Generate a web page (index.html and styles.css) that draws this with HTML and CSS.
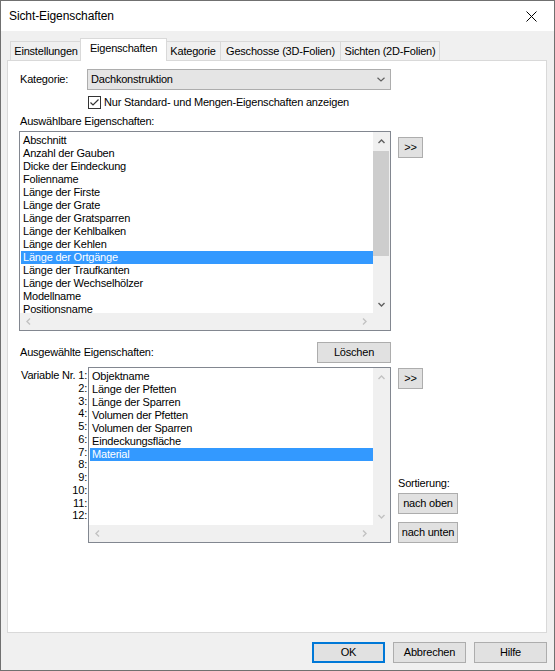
FILE: index.html
```html
<!DOCTYPE html>
<html lang="de">
<head>
<meta charset="utf-8">
<title>Sicht-Eigenschaften</title>
<link rel="stylesheet" href="styles.css">
</head>
<body>
<div class="window">
  <div class="titlebar">
    <span class="title">Sicht-Eigenschaften</span>
    <span class="close">
      <svg width="11" height="11" viewBox="0 0 11 11"><path d="M0.5 0.5 L10.5 10.5 M10.5 0.5 L0.5 10.5" stroke="#000" stroke-width="1" fill="none"/></svg>
    </span>
  </div>

  <div class="client">
    <div class="tabs">
      <div class="tab tab-settings">Einstellungen</div>
      <div class="tab tab-props active">Eigenschaften</div>
      <div class="tab tab-cat">Kategorie</div>
      <div class="tab tab-floors">Geschosse (3D-Folien)</div>
      <div class="tab tab-views">Sichten (2D-Folien)</div>
    </div>

    <div class="panel">
      <div class="kat-row">
        <span class="kat-label">Kategorie:</span>
        <div class="combo">
          <span class="combo-text">Dachkonstruktion</span>
          <svg class="combo-arrow" width="8" height="5" viewBox="0 0 8 5"><polyline points="0.5,0.8 4,4 7.5,0.8" fill="none" stroke="#606060" stroke-width="1.2"/></svg>
        </div>
      </div>

      <label class="check-row">
        <span class="checkbox">
          <svg width="11" height="11" viewBox="0 0 11 11"><polyline points="1.5,5.5 4,8 9.5,2.5" fill="none" stroke="#333" stroke-width="1.2"/></svg>
        </span>
        <span>Nur Standard- und Mengen-Eigenschaften anzeigen</span>
      </label>

      <div class="caption">Auswählbare Eigenschaften:</div>

      <div class="pick-row">
        <div class="listbox list-avail">
          <div class="items">
            <div class="item">Abschnitt</div>
            <div class="item">Anzahl der Gauben</div>
            <div class="item">Dicke der Eindeckung</div>
            <div class="item">Folienname</div>
            <div class="item">Länge der Firste</div>
            <div class="item">Länge der Grate</div>
            <div class="item">Länge der Gratsparren</div>
            <div class="item">Länge der Kehlbalken</div>
            <div class="item">Länge der Kehlen</div>
            <div class="item selected">Länge der Ortgänge</div>
            <div class="item">Länge der Traufkanten</div>
            <div class="item">Länge der Wechselhölzer</div>
            <div class="item">Modellname</div>
            <div class="item">Positionsname</div>
          </div>
          <div class="vscroll">
            <span class="sb-btn sb-up"><svg width="7" height="5" viewBox="0 0 7 5"><polyline points="0.5,4 3.5,1 6.5,4" fill="none" stroke="#606060" stroke-width="1.4"/></svg></span>
            <span class="sb-track"><span class="sb-thumb"></span></span>
            <span class="sb-btn"><svg width="7" height="5" viewBox="0 0 7 5"><polyline points="0.5,1 3.5,4 6.5,1" fill="none" stroke="#606060" stroke-width="1.4"/></svg></span>
          </div>
          <div class="hscroll">
            <span class="sb-btn"><svg width="5" height="7" viewBox="0 0 5 7"><polyline points="4,0.5 1,3.5 4,6.5" fill="none" stroke="#c2c2c2" stroke-width="1.4"/></svg></span>
            <span class="sb-btn"><svg width="5" height="7" viewBox="0 0 5 7"><polyline points="1,0.5 4,3.5 1,6.5" fill="none" stroke="#c2c2c2" stroke-width="1.4"/></svg></span>
          </div>
          <div class="corner"></div>
        </div>
        <button class="btn btn-add btn-add-top">&gt;&gt;</button>
      </div>

      <div class="chosen-head">
        <span class="caption-inline">Ausgewählte Eigenschaften:</span>
        <button class="btn btn-delete">Löschen</button>
      </div>

      <div class="chosen-row">
        <div class="var-labels">
          <div class="var">Variable Nr. 1:</div>
          <div class="var">2:</div>
          <div class="var">3:</div>
          <div class="var">4:</div>
          <div class="var">5:</div>
          <div class="var">6:</div>
          <div class="var">7:</div>
          <div class="var">8:</div>
          <div class="var">9:</div>
          <div class="var">10:</div>
          <div class="var">11:</div>
          <div class="var">12:</div>
        </div>
        <div class="listbox list-chosen">
          <div class="items">
            <div class="item">Objektname</div>
            <div class="item">Länge der Pfetten</div>
            <div class="item">Länge der Sparren</div>
            <div class="item">Volumen der Pfetten</div>
            <div class="item">Volumen der Sparren</div>
            <div class="item">Eindeckungsfläche</div>
            <div class="item selected">Material</div>
          </div>
          <div class="vscroll">
            <span class="sb-btn sb-up"><svg width="7" height="5" viewBox="0 0 7 5"><polyline points="0.5,4 3.5,1 6.5,4" fill="none" stroke="#c2c2c2" stroke-width="1.4"/></svg></span>
            <span class="sb-track"></span>
            <span class="sb-btn"><svg width="7" height="5" viewBox="0 0 7 5"><polyline points="0.5,1 3.5,4 6.5,1" fill="none" stroke="#c2c2c2" stroke-width="1.4"/></svg></span>
          </div>
          <div class="hscroll">
            <span class="sb-btn"><svg width="5" height="7" viewBox="0 0 5 7"><polyline points="4,0.5 1,3.5 4,6.5" fill="none" stroke="#c2c2c2" stroke-width="1.4"/></svg></span>
            <span class="sb-btn"><svg width="5" height="7" viewBox="0 0 5 7"><polyline points="1,0.5 4,3.5 1,6.5" fill="none" stroke="#c2c2c2" stroke-width="1.4"/></svg></span>
          </div>
          <div class="corner"></div>
        </div>
        <div class="side-col">
          <button class="btn btn-add btn-add-side">&gt;&gt;</button>
          <div class="side-spacer"></div>
          <div class="sort-label">Sortierung:</div>
          <button class="btn btn-sort">nach oben</button>
          <button class="btn btn-sort">nach unten</button>
        </div>
      </div>
    </div>

    <div class="dialog-buttons">
      <button class="btn btn-dlg default">OK</button>
      <button class="btn btn-dlg">Abbrechen</button>
      <button class="btn btn-dlg">Hilfe</button>
    </div>
  </div>
</div>
</body>
</html>
```

FILE: styles.css
```css
* {
  box-sizing: border-box;
}

html,
body {
  margin: 0;
  padding: 0;
}

body {
  width: 555px;
  height: 671px;
  overflow: hidden;
  background: #f0f0f0;
  color: #000;
  font: 11px/13px "Liberation Sans", Arial, sans-serif;
  letter-spacing: -0.2px;
}

/* window frame */
.window {
  width: 555px;
  height: 671px;
  border: 1px solid #707070;
  display: flex;
  flex-direction: column;
  background: #f0f0f0;
}

.titlebar {
  flex: none;
  height: 30px;
  background: #fff;
  display: flex;
  align-items: center;
}

.title {
  flex: 1;
  padding-left: 8px;
  font-size: 12px;
  letter-spacing: -0.1px;
}

.close {
  width: 46px;
  height: 30px;
  display: flex;
  align-items: center;
  justify-content: center;
}

.close svg {
  display: block;
}

.client {
  flex: 1;
  display: flex;
  flex-direction: column;
  padding: 7px 7px 0 6px;
}

/* tab strip */
.tabs {
  flex: none;
  height: 22px;
  display: flex;
  align-items: flex-end;
  padding-left: 3px;
  position: relative;
  z-index: 1;
}

.tab {
  height: 19px;
  border: 1px solid #d9d9d9;
  border-bottom: none;
  background: #f0f0f0;
  text-align: center;
  line-height: 19px;
  white-space: nowrap;
}

.tab + .tab {
  margin-left: -1px;
}

.tab.active {
  height: 23px;
  margin: 0 -2px -1px -2px;
  background: #fff;
  line-height: 19px;
  position: relative;
  z-index: 2;
}

.tab.active + .tab {
  margin-left: 0;
}

.tab-settings { width: 72px; }
.tab-props { width: 87px; }
.tab-cat { width: 56px; }
.tab-floors { width: 121px; }
.tab-views { width: 100px; }

/* tab page */
.panel {
  flex: none;
  height: 573px;
  border: 1px solid #d9d9d9;
  background: #fff;
  padding: 8px 0 0 11px;
}

.kat-row {
  display: flex;
  height: 21px;
}

.kat-label {
  width: 68px;
  padding-left: 1px;
  line-height: 21px;
}

.combo {
  width: 304px;
  height: 21px;
  border: 1px solid #adadad;
  background: #e5e5e5;
  display: flex;
  align-items: center;
  justify-content: space-between;
  padding: 0 5px 0 3px;
}

.combo-arrow {
  display: block;
}

.check-row {
  display: flex;
  align-items: center;
  height: 13px;
  margin: 6px 0 0 69px;
}

.checkbox {
  width: 13px;
  height: 13px;
  border: 1px solid #333;
  background: #fff;
  margin-right: 3px;
  flex: none;
}

.checkbox svg {
  display: block;
}

.caption {
  margin: 6px 0 3px;
  padding-left: 1px;
  height: 13px;
}

.pick-row {
  display: flex;
  align-items: flex-start;
}

/* list boxes with scroll bars */
.listbox {
  flex: none;
  border: 1px solid #828790;
  background: #fff;
  display: grid;
  grid-template-columns: 1fr 17px;
  grid-template-rows: 1fr 17px;
  overflow: hidden;
}

.list-avail {
  width: 372px;
  height: 200px;
}

.list-chosen {
  width: 303px;
  height: 176px;
}

.items {
  overflow: hidden;
  padding-top: 2px;
}

.item {
  height: 13px;
  line-height: 13px;
  margin-left: 1px;
  padding-left: 2px;
  white-space: nowrap;
}

.item.selected {
  background: #3399ff;
  color: #fff;
}

.vscroll {
  background: #f0f0f0;
  display: flex;
  flex-direction: column;
}

.hscroll {
  background: #f0f0f0;
  display: flex;
  justify-content: space-between;
}

.corner {
  background: #f0f0f0;
}

.sb-btn {
  width: 17px;
  height: 17px;
  flex: none;
  display: flex;
  align-items: center;
  justify-content: center;
}

.sb-btn svg {
  display: block;
}

.sb-up {
  padding-top: 2px;
}

.sb-track {
  flex: 1;
  display: block;
}

.sb-thumb {
  display: block;
  height: 105px;
  margin: 2px 1px 0 0;
  background: #cdcdcd;
}

/* buttons */
.btn {
  font: inherit;
  letter-spacing: inherit;
  color: #000;
  height: 21px;
  padding: 0;
  margin: 0;
  border: 1px solid #adadad;
  background: #e1e1e1;
  line-height: 19px;
  text-align: center;
  flex: none;
}

.btn-add {
  width: 25px;
}

.btn-add-top {
  margin: 6px 0 0 7px;
}

.chosen-head {
  width: 372px;
  height: 21px;
  margin-top: 11px;
  display: flex;
  align-items: center;
  justify-content: space-between;
}

.caption-inline {
  padding-left: 1px;
}

.btn-delete {
  width: 74px;
}

.chosen-row {
  display: flex;
  margin-top: 4px;
}

.var-labels {
  width: 69px;
  padding: 2px 1px 0 0;
  text-align: right;
}

.var {
  height: 12.75px;
  line-height: 12.75px;
  white-space: nowrap;
}

.side-col {
  width: 60px;
  height: 176px;
  margin-left: 7px;
  display: flex;
  flex-direction: column;
  align-items: flex-start;
}

.btn-add-side {
  margin-top: 1px;
}

.side-spacer {
  flex: 1;
}

.sort-label {
  height: 13px;
  margin-bottom: 3px;
}

.btn-sort {
  width: 60px;
}

.btn-sort + .btn-sort {
  margin-top: 8px;
}

/* dialog buttons */
.dialog-buttons {
  flex: none;
  display: flex;
  justify-content: flex-end;
  gap: 8px;
  margin-top: 9px;
}

.btn-dlg {
  width: 73px;
}

.btn-dlg.default {
  border: 2px solid #0078d7;
  line-height: 17px;
}
```
